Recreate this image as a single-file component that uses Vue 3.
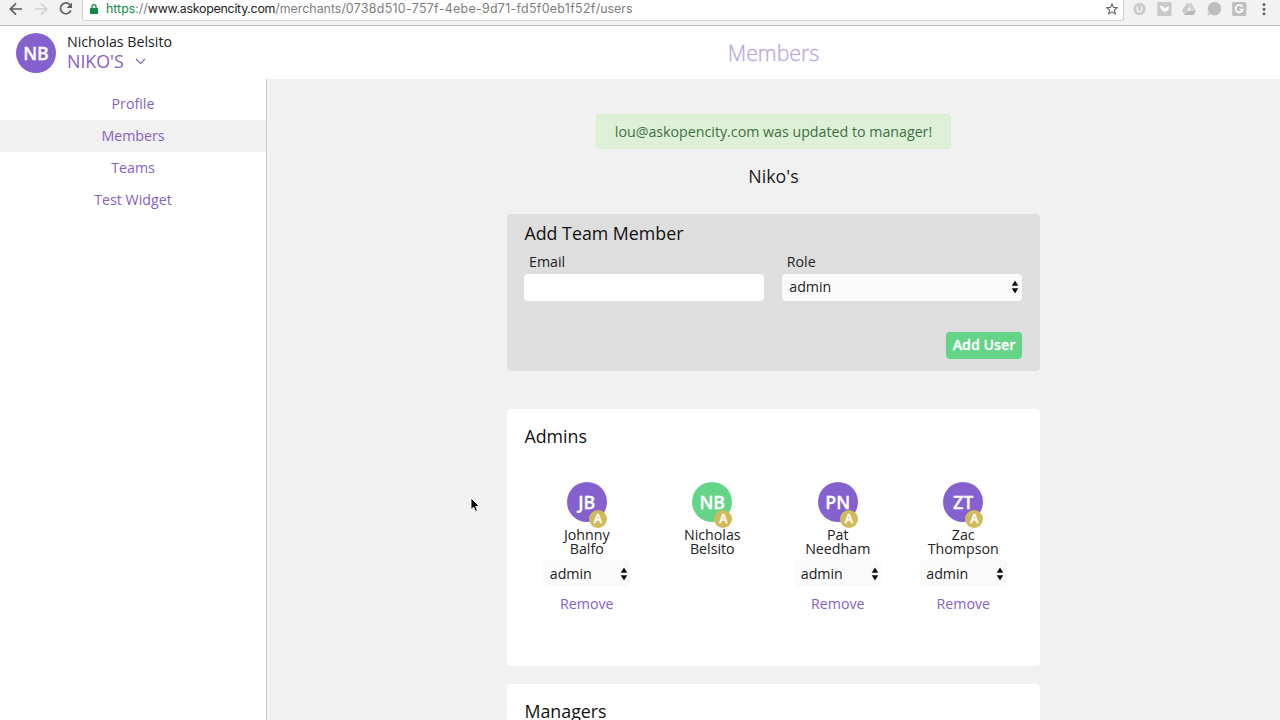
<script setup>
const nav = ['Profile', 'Members', 'Teams', 'Test Widget']
const admins = [
  { initials: 'JB', first: 'Johnny', last: 'Balfo', editable: true },
  { initials: 'NB', first: 'Nicholas', last: 'Belsito', self: true },
  { initials: 'PN', first: 'Pat', last: 'Needham', editable: true },
  { initials: 'ZT', first: 'Zac', last: 'Thompson', editable: true },
]
</script>

<template>
  <div class="screen">
    <div class="chrome">
      <svg class="nav-icons" width="82" height="25" viewBox="0 0 82 25" fill="none" stroke-width="1.7">
        <path d="M22 9H10.500M16 3.300L10.300 9L16 14.700" stroke="#5e5e5e" />
        <path d="M35 9H46.500M41 3.300L46.700 9L41 14.700" stroke="#d2d2d2" />
        <path d="M70.300 5.200A5.400 5.400 0 1 0 70.900 10.400" stroke="#5e5e5e" />
        <path d="M72 2.700V7.900H66.700Z" fill="#5e5e5e" />
      </svg>
      <div class="omnibox">
        <svg class="lock" width="8" height="10" viewBox="0 0 8 10">
          <rect y="4" width="8" height="6" rx=".6" fill="#108a43" />
          <path d="M2 4.500V2.700a2 2 0 0 1 4 0V4.500" fill="none" stroke="#108a43" stroke-width="1.300" />
        </svg>
        <span class="url"><span class="secure">https</span>://<span class="host">www.askopencity.com</span>/merchants/<span class="uuid">0738d510-757f-4ebe-9d71-fd5f0eb1f52f</span>/users</span>
        <svg class="star" width="12" height="12" viewBox="0 0 12 12">
          <path d="M6 .9L7.500 4.400L11.300 4.700L8.400 7.200L9.300 10.900L6 8.900L2.700 10.900L3.600 7.200L.7 4.700L4.500 4.400Z" fill="none" stroke="#666" stroke-width="1.100" />
        </svg>
      </div>
      <svg class="extensions" width="156" height="25" viewBox="1124 0 156 25">
        <circle cx="1139.500" cy="9" r="6.200" fill="#cbcbcb" />
        <path d="M1137.300 6.500V9.500a2.200 2.200 0 0 0 4.400 0V6.500" fill="none" stroke="#f2f2f2" stroke-width="1.500" />
        <rect x="1157.300" y="2" width="14.300" height="14" rx="1" fill="#c9c9c9" />
        <path d="M1159.800 5.500C1160.500 9 1162 11.500 1165 11.800C1167.500 11.600 1169 9.500 1169.200 6.500C1167 6.300 1165.700 7 1164.800 8.500C1163.700 6.500 1162 5.600 1159.800 5.500Z" fill="#fafafa" />
        <path d="M1187 3H1191.500L1184.500 15L1182 10.800Z" fill="#c9c9c9" />
        <path d="M1187 3H1191.500L1196 10.800H1191.500Z" fill="#d4d4d4" />
        <path d="M1187.500 10.800H1196L1193.500 15H1184.500Z" fill="#b8b8b8" />
        <circle cx="1214.500" cy="8.800" r="6.700" fill="#bdbdbd" />
        <circle cx="1208.700" cy="14" r="1.300" fill="#c5c5c5" />
        <rect x="1232.200" y="2" width="14.200" height="14" rx="1" fill="#bfbfbf" />
        <path d="M1242.400 6.700A3.700 3.700 0 1 0 1242.900 9.500H1239.700" fill="none" stroke="#fff" stroke-width="1.700" />
        <g fill="#666"><circle cx="1264" cy="4.600" r="1.500" /><circle cx="1264" cy="9.200" r="1.500" /><circle cx="1264" cy="13.800" r="1.500" /></g>
      </svg>
    </div>

    <header class="header">
      <div class="account">
        <div class="avatar">NB</div>
        <div>
          <div class="user-name">Nicholas Belsito</div>
          <div class="company">
            NIKO'S
            <svg width="11" height="7" viewBox="0 0 11 7"><path d="M1 1L5.500 5.500L10 1" fill="none" stroke="#8561c5" stroke-width="1.100" /></svg>
          </div>
        </div>
      </div>
      <h1>Members</h1>
    </header>

    <div class="body">
      <nav class="sidebar">
        <a v-for="item in nav" :key="item" :class="{ active: item === 'Members' }">{{ item }}</a>
      </nav>
      <main>
        <div class="alert">lou@askopencity.com was updated to manager!</div>
        <h2 class="merchant">Niko's</h2>

        <section class="add-card">
          <h3>Add Team Member</h3>
          <div class="fields">
            <div class="field">
              <label>Email</label>
              <div class="input"></div>
            </div>
            <div class="field">
              <label>Role</label>
              <div class="select">
                admin
                <svg width="8" height="14" viewBox="0 0 8 14"><path d="M.7 5.700L4 .5L7.300 5.700ZM.7 8.300H7.300L4 13.500Z" fill="#111" /></svg>
              </div>
            </div>
          </div>
          <button>Add User</button>
        </section>

        <section class="card admins">
          <h3>Admins</h3>
          <div class="members">
            <div v-for="m in admins" :key="m.initials" class="member">
              <div class="avatar" :class="{ self: m.self }">
                {{ m.initials }}
                <span class="badge">A</span>
              </div>
              <div class="name">{{ m.first }}<br />{{ m.last }}</div>
              <template v-if="m.editable">
                <div class="select small">
                  admin
                  <svg width="8" height="14" viewBox="0 0 8 14"><path d="M.7 5.700L4 .5L7.300 5.700ZM.7 8.300H7.300L4 13.500Z" fill="#111" /></svg>
                </div>
                <a class="remove">Remove</a>
              </template>
            </div>
          </div>
        </section>

        <section class="card managers">
          <h3>Managers</h3>
        </section>
      </main>
    </div>

    <svg class="cursor" width="12" height="17" viewBox="0 0 12 17">
      <path d="M1 1V12.600L3.700 10.100L5.500 14.400L7.500 13.500L5.700 9.400H9.400Z" fill="#000" stroke="#fff" stroke-width=".9" />
    </svg>
  </div>
</template>

<style>
body {
  margin: 0;
  overflow: hidden;
}
</style>

<style scoped>
.screen {
  position: relative;
  width: 1280px;
  height: 720px;
  overflow: hidden;
  display: flex;
  flex-direction: column;
  background: #fff;
  color: #222;
  font: 14.22px/20px "Open Sans", sans-serif;
}
.screen * {
  box-sizing: border-box;
}
h1, h2, h3 {
  margin: 0;
  font-weight: 400;
}
.chrome {
  flex: none;
  display: flex;
  height: 26px;
  background: #f2f2f2;
  border-bottom: 1px solid #c0c0c0;
}
.omnibox {
  flex: 1;
  display: flex;
  align-items: flex-start;
  height: 21px;
  padding: 0 5px 0 7px;
  background: #fff;
  border: 1px solid #d0d0d0;
  border-top: 0;
  border-radius: 0 0 3px 3px;
}
.lock {
  margin-top: 4px;
}
.url {
  flex: 1;
  margin-left: 8px;
  font: 12.4px/18px Inter, sans-serif;
  color: #7d7d7d;
  white-space: nowrap;
}
.secure {
  color: #108a43;
}
.host {
  color: #222;
  letter-spacing: -.26px;
}
.uuid {
  letter-spacing: .31px;
}
.star {
  margin-top: 3px;
}
.header {
  flex: none;
  display: flex;
  height: 53px;
}
.account {
  display: flex;
  width: 267px;
  padding: 7px 0 0 16px;
  gap: 11px;
}
.avatar {
  position: relative;
  flex: none;
  width: 40px;
  height: 40px;
  border-radius: 50%;
  background: #8561cf;
  color: #fff;
  text-align: center;
  font-size: 17.8px;
  font-weight: 600;
  line-height: 40px;
  -webkit-text-stroke: .3px #fff;
}
.user-name {
  line-height: 18px;
}
.company {
  display: flex;
  align-items: center;
  gap: 11px;
  color: #8561c5;
  font-size: 17.8px;
  line-height: 20px;
}
h1 {
  flex: 1;
  text-align: center;
  font-size: 21.3px;
  font-weight: 300;
  line-height: 53px;
  color: #b9a6e0;
  -webkit-text-stroke: .3px #b9a6e0;
}
.body {
  flex: 1;
  display: flex;
  min-height: 0;
}
.sidebar {
  width: 267px;
  padding-top: 9px;
  border-right: 1px solid #ccc;
}
.sidebar a {
  display: block;
  height: 32px;
  line-height: 32px;
  text-align: center;
  color: #8561c5;
}
.sidebar .active {
  background: #f1f1f1;
}
main {
  flex: 1;
  display: flex;
  flex-direction: column;
  align-items: center;
  padding-top: 35px;
  background: #f1f1f1;
}
.alert {
  width: 355px;
  height: 35px;
  border: 1px solid #d8edcf;
  border-radius: 4px;
  background: #dff0d8;
  color: #3d7042;
  text-align: center;
  line-height: 33px;
}
.merchant {
  margin-top: 14px;
  font-size: 17.8px;
  line-height: 26px;
}
h3 {
  padding-left: .5px;
  font-size: 17.8px;
  line-height: 24px;
  color: #111;
}
.add-card {
  flex: none;
  display: flex;
  flex-direction: column;
  width: 533px;
  height: 157px;
  margin-top: 25px;
  padding: 7px 18px 0 17px;
  border-radius: 4px;
  background: #dedede;
}
.fields {
  display: grid;
  grid-template-columns: 1fr 1fr;
  gap: 17.500px;
  margin-top: 7px;
}
label {
  display: block;
  height: 22px;
  padding-left: 5px;
}
.input,
.select {
  height: 26.500px;
  border-radius: 4px;
  background: #fff;
}
.select {
  display: flex;
  align-items: center;
  justify-content: space-between;
  padding: 0 3px 0 7.500px;
  background: #fafafa;
}
button {
  align-self: flex-end;
  width: 76px;
  height: 27px;
  margin-top: 31px;
  padding: 0;
  border: 0;
  border-radius: 4px;
  background: #64d488;
  color: #fff;
  font: 600 14.22px/26px "Open Sans", sans-serif;
  -webkit-text-stroke: .3px #fff;
}
.card {
  flex: none;
  width: 533px;
  padding: 15.400px 14px 0 17px;
  border-radius: 4px;
  background: #fff;
}
.admins {
  height: 256.500px;
  margin-top: 38px;
}
.managers {
  height: 200px;
  margin-top: 18px;
  padding-top: 15px;
}
.members {
  display: grid;
  grid-template-columns: repeat(4, 1fr);
  padding-top: 33.200px;
}
.member {
  display: flex;
  flex-direction: column;
  align-items: center;
}
.self {
  background: #64d488;
}
.badge {
  position: absolute;
  top: 28px;
  right: 0;
  width: 18px;
  height: 18px;
  border-radius: 50%;
  background: #cfbb5c;
  font-size: 12.4px;
  line-height: 18px;
}
.name {
  margin-top: 6px;
  text-align: center;
  line-height: 14.200px;
}
.small {
  width: 87px;
  margin-top: 4.500px;
  padding: 0 2.500px 0 6.500px;
}
.remove {
  margin-top: 7px;
  color: #8561c5;
}
.cursor {
  position: absolute;
  left: 470px;
  top: 497px;
}
</style>
